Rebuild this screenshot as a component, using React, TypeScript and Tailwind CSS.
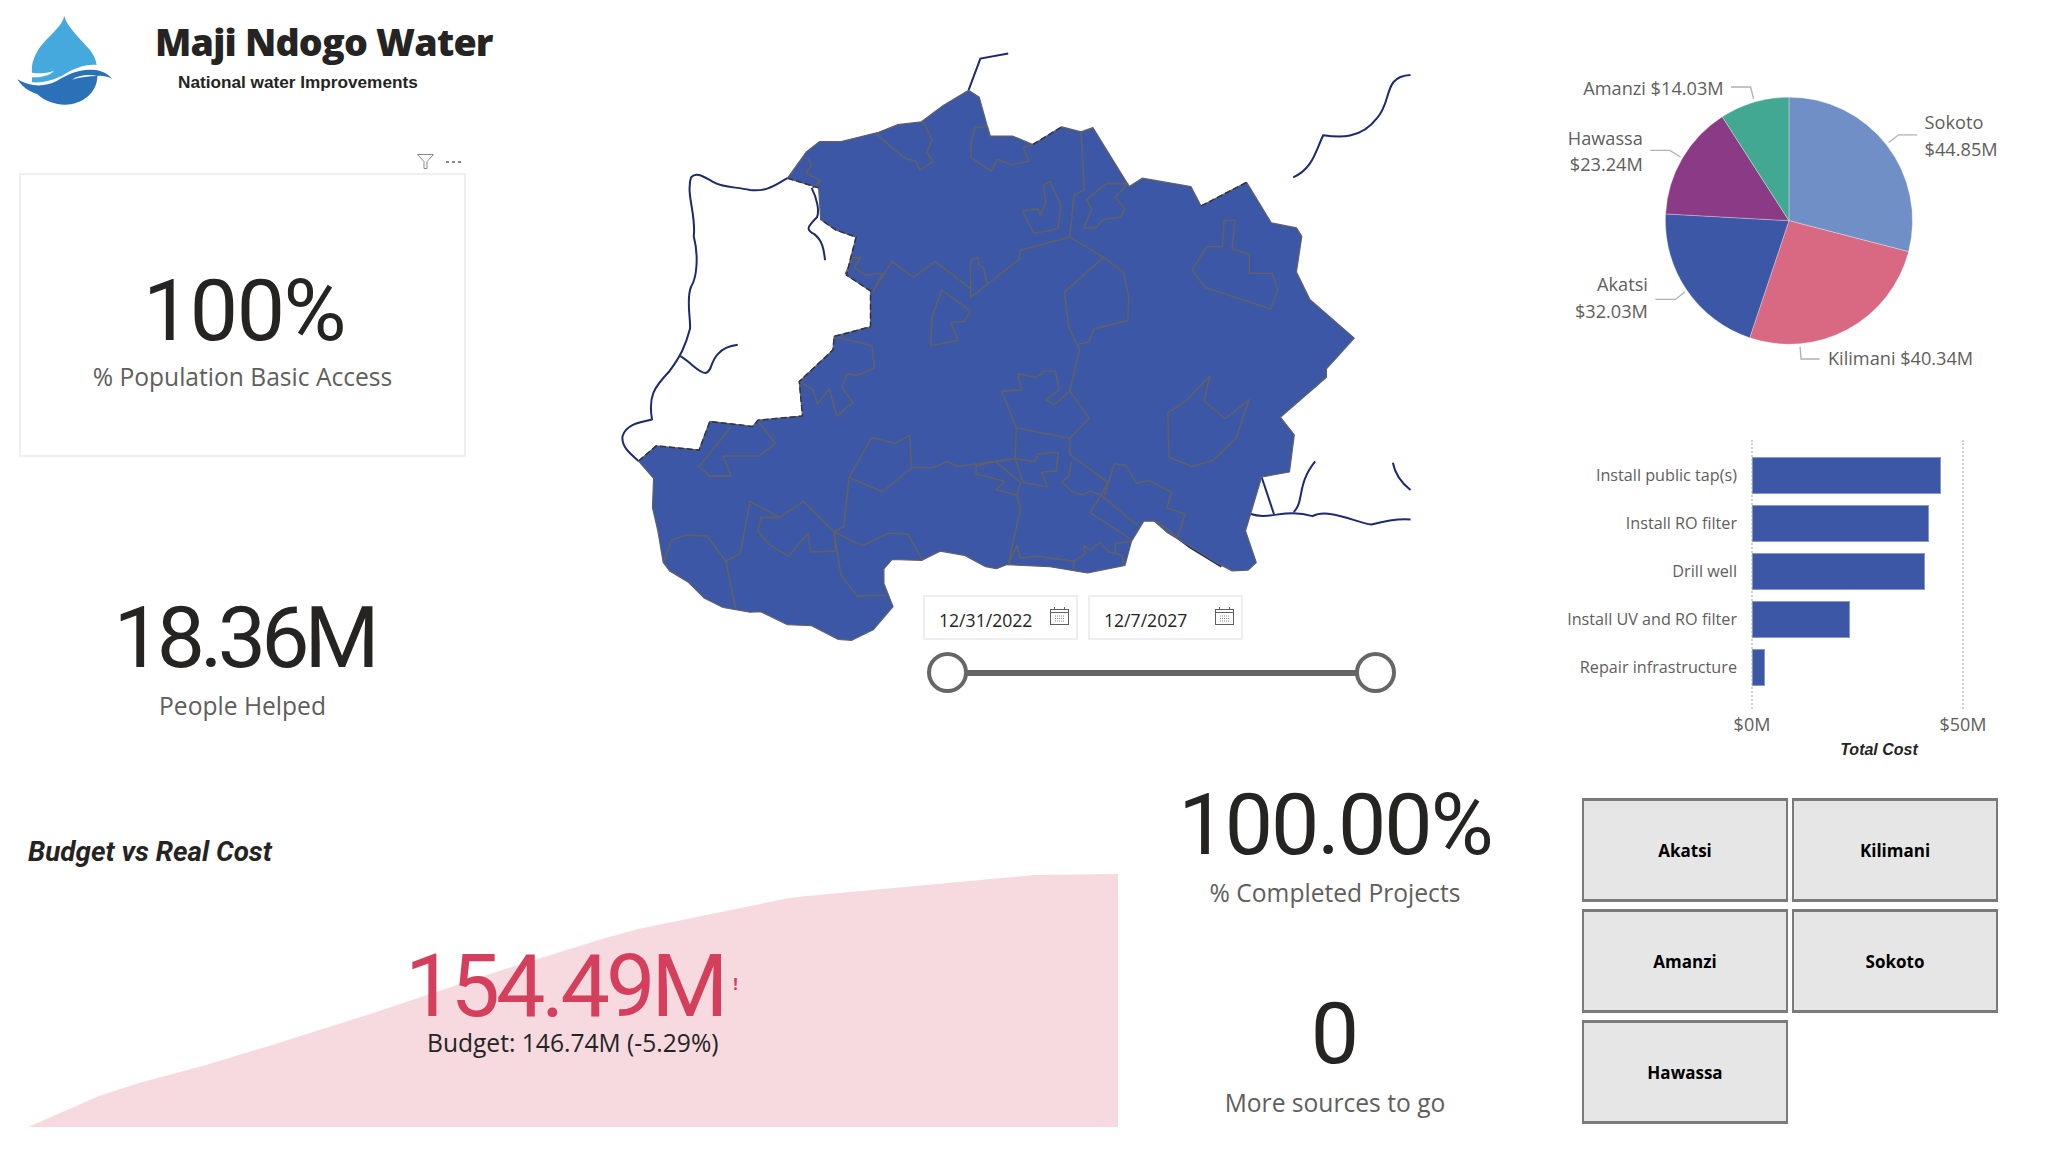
const pieData = [
  { name: 'Sokoto', value: 44.85, color: '#6f8fc6' },
  { name: 'Kilimani', value: 40.34, color: '#d96882' },
  { name: 'Akatsi', value: 32.03, color: '#3b57a6' },
  { name: 'Hawassa', value: 23.24, color: '#8b3a86' },
  { name: 'Amanzi', value: 14.03, color: '#43a892' },
]

const barData = [
  { name: 'Install public tap(s)', value: 44.8 },
  { name: 'Install RO filter', value: 42 },
  { name: 'Drill well', value: 41 },
  { name: 'Install UV and RO filter', value: 23.2 },
  { name: 'Repair infrastructure', value: 3.2 },
]

const districts = ['Akatsi', 'Kilimani', 'Amanzi', 'Sokoto', 'Hawassa']

const mapOutline =
  'M72 1024 L105 988 L185 998 L205 930 L285 942 L295 927 L378 917 L372 835 L435 760 L437 728 L505 705 L505 620 L460 582 L478 492 L440 475 L412 450 L408 375 L350 352 L385 290 L410 265 L450 265 L520 243 L555 225 L600 218 L640 180 L688 143 L708 160 L728 252 L770 252 L808 272 L862 230 L898 242 L920 232 L988 372 L1012 352 L1103 372 L1122 418 L1207 362 L1253 458 L1300 470 L1310 490 L1300 575 L1325 640 L1408 732 L1356 805 L1356 825 L1270 920 L1296 962 L1287 1050 L1235 1062 L1205 1190 L1225 1265 L1210 1283 L1180 1285 L1150 1265 L1100 1225 L1060 1195 L1035 1167 L1015 1167 L992 1215 L980 1272 L910 1290 L840 1275 L790 1272 L760 1270 L740 1280 L720 1275 L680 1248 L635 1238 L600 1260 L545 1258 L530 1280 L530 1315 L547 1370 L510 1425 L470 1450 L445 1448 L395 1415 L350 1413 L300 1382 L280 1383 L230 1372 L195 1350 L165 1312 L130 1285 L118 1265 L108 1190 L98 1135 L100 1065 Z'

const mapBorders = [
  'M515 245 L545 280 L570 305 L590 312 L597 333 L622 312 L610 290 L620 260 L603 218',
  'M728 252 L723 230 L700 232 L693 262 L693 303 L730 335 L742 307 L767 320 L800 312 L790 280 L808 272',
  'M898 242 L904 380 L885 392 L877 492 L785 523 L782 545 L692 635 L692 548 L705 540 L708 560 L716 565 L722 600',
  'M692 615 L626 550 L585 587 L545 550 L510 620 L528 578 L495 582 L475 565 L486 542 L472 540 L458 580',
  'M877 492 L940 540 L977 575 L987 635 L985 690 L922 710 L912 742 L890 747 L875 705 L867 622 L940 540',
  'M890 747 L895 760 L877 858 L913 922 L877 970 L777 945 L750 858 L787 855 L780 817 L815 825 L830 810 L850 810 L857 855 L832 878 L848 890 L877 858',
  'M777 945 L775 1018 L812 1025 L818 1007 L855 1003 L852 1048 L825 1050 L835 1085 L790 1075 L775 1018 L668 1037 L648 1025 L622 1040 L582 1040 L527 1097 L465 1063 L507 968 L550 982 L578 963 L582 1040',
  'M465 1063 L455 1180 L437 1192 L380 1120 L335 1158 L300 1158 L295 1190 L315 1222 L352 1250 L388 1195 L393 1240 L440 1238 L437 1192 L490 1225 L540 1195 L575 1198 L602 1260',
  'M877 970 L877 1008 L948 1075 L935 1105 L1003 1177',
  'M1040 1167 L1078 1205 L1092 1150 L1058 1135 L1067 1098 L1025 1070 L1002 1077 L982 1035 L960 1030 L942 1105',
  'M935 1105 L915 1147 L992 1210',
  'M880 1025 L875 1060 L862 1073 L880 1095 L900 1105 L915 1095 L935 1105',
  'M775 1018 L740 1025 L702 1035 L702 1055 L755 1072 L740 1092 L778 1105 L785 1135 L762 1270 L778 1225 L785 1255 L815 1250 L885 1262 L883 1285',
  'M738 1025 L785 1075 L778 1105',
  'M885 1262 L905 1245 L903 1225 L915 1235 L933 1217 L950 1240 L962 1243 L962 1220 L992 1215',
  'M962 1243 L975 1250 L978 1272',
  'M1138 822 L1128 882 L1167 923 L1212 878 L1187 970 L1145 1022 L1105 1037 L1062 1015 L1060 910 L1095 880 Z',
  'M1165 452 L1185 452 L1180 520 L1212 532 L1212 578 L1255 578 L1265 618 L1252 663 L1130 612 L1105 570 L1132 515 L1162 515 Z',
  'M840 360 L860 415 L855 472 L810 483 L788 430 L818 425 L822 440 L832 410 L828 368 Z',
  'M945 365 L985 365 L962 398 L980 425 L972 445 L940 450 L925 470 L903 470 L918 425 L908 403 Z',
  'M638 618 L692 668 L680 692 L655 695 L668 737 L617 750 L620 680 Z',
  'M437 728 L508 750 L512 803 L480 820 L460 817 L452 850 L472 885 L442 917 L428 852 L406 888 L398 855 L372 835',
  'M245 942 L185 1037 L205 1060 L245 1060 L230 1012 L297 1012 L327 982 L295 928',
  'M118 1265 L133 1212 L160 1200 L200 1202 L235 1262 L262 1243 L280 1120 L335 1158',
  'M235 1262 L253 1375',
  'M437 1192 L450 1295 L480 1345 L535 1343',
  'M388 305 L395 320 L385 340 L412 358 L397 375',
]

const mapRivers = [
  'M688 143 L710 68 L762 56',
  'M1294 350 C1330 330 1335 290 1350 250 C1380 255 1420 260 1450 210 C1480 170 1460 110 1513 107',
  'M350 352 C330 365 315 385 280 380 C250 372 230 375 210 360 C195 350 180 335 170 350 C160 390 180 440 175 490 C185 540 180 590 170 610 C160 640 170 690 168 710 C160 750 150 775 130 810 C100 850 90 870 97 925 C90 930 50 930 42 965 C40 990 55 1005 72 1024',
  'M150 775 C170 790 185 815 197 815 C210 810 205 790 220 770 C230 755 245 750 257 748',
  'M395 375 C405 400 410 430 405 445 C385 470 385 475 400 485 C415 500 418 520 420 547',
  'M1235 1062 L1258 1150',
  'M1215 1150 C1250 1165 1280 1135 1330 1155 C1360 1135 1410 1170 1440 1175 C1470 1165 1490 1160 1513 1163',
  'M1295 1145 C1315 1120 1300 1080 1335 1025',
  'M1480 1028 C1485 1060 1500 1080 1513 1093',
  'M1040 1170 L1100 1228 L1160 1275',
]

const mapDashes = [
  'M72 1024 L105 988 L185 998 L205 930 L285 942 L295 927 L378 917 L372 835 L435 760 L437 728 L505 705 L505 620 L460 582 L478 492 L440 475 L412 450',
  'M350 352 L408 375',
  'M808 272 L862 230',
  'M1122 418 L1207 362',
]

function slicePath(startValue: number, value: number, total: number) {
  const cx = 769
  const cy = 507
  const r = 367
  const a0 = (startValue / total) * Math.PI * 2
  const a1 = ((startValue + value) / total) * Math.PI * 2
  const x0 = cx + r * Math.sin(a0)
  const y0 = cy - r * Math.cos(a0)
  const x1 = cx + r * Math.sin(a1)
  const y1 = cy - r * Math.cos(a1)
  return `M${cx} ${cy} L${x0} ${y0} A${r} ${r} 0 ${a1 - a0 > Math.PI ? 1 : 0} 1 ${x1} ${y1} Z`
}

function Logo() {
  return (
    <svg className="w-[130px] h-[120px] shrink-0" viewBox="0 0 390 360">
      <path
        d="M193 48 C200 80 240 115 270 150 C283 168 288 180 290 195 C255 192 225 205 195 222 C170 238 130 250 96 247 L96 232 C120 232 150 228 162 212 C140 220 115 222 96 218 C93 190 105 160 125 135 C155 100 185 80 193 48 Z"
        fill="#45a9dd"
      />
      <path
        d="M52 238 C85 258 130 264 170 243 C205 222 240 205 285 210 C305 212 325 222 336 236 C318 228 305 226 292 228 C292 280 245 314 195 314 C160 314 130 300 112 282 C85 275 65 258 52 238 Z"
        fill="#2b71b8"
      />
      <path d="M216 239 C235 226 265 222 292 228 C265 228 240 232 216 239 Z" fill="#ffffff" />
    </svg>
  )
}

function Kpi({ value, label, valueClass, labelClass }: { value: string; label: string; valueClass: string; labelClass: string }) {
  return (
    <div className="flex flex-col items-center">
      <div className={`font-['Roboto'] text-[#252423] leading-none ${valueClass}`}>{value}</div>
      <div className={`font-['Open_Sans'] text-[#605e5c] text-[24.6px] leading-[36px] ${labelClass}`}>{label}</div>
    </div>
  )
}

function CalendarIcon() {
  return (
    <svg className="w-[19px] h-[18px] shrink-0" viewBox="0 0 19 18" fill="none">
      <rect x="0.5" y="2.5" width="18" height="15" stroke="#605e5c" />
      <path d="M1 5.5 H18" stroke="#605e5c" />
      <path d="M4.5 0 V3 M14.5 0 V3" stroke="#605e5c" />
      <path d="M5 9 H14 M5 11.5 H14 M5 14 H14" stroke="#8a8886" strokeDasharray="1 1" />
    </svg>
  )
}

function DateBox({ value }: { value: string }) {
  return (
    <div className="w-[155px] h-[45px] border-2 border-[#eeeeee] bg-white flex items-start pl-[14px] pr-[7px] pt-[10px] justify-between">
      <span className="font-['Open_Sans'] text-[17.6px] leading-[26px] text-[#252423]">{value}</span>
      <CalendarIcon />
    </div>
  )
}

function MapVisual() {
  return (
    <div className="relative w-[840px] h-[660px]">
      <svg className="w-[840px] h-[660px]" viewBox="0 0 1568 1568" preserveAspectRatio="none" fill="none">
        {mapRivers.map((d) => (
          <path key={d} d={d} stroke="#1c2a6e" strokeWidth="2" vectorEffect="non-scaling-stroke" />
        ))}
        <path d={mapOutline} fill="#3b57a6" stroke="#5f6068" strokeWidth="1.2" strokeLinejoin="round" vectorEffect="non-scaling-stroke" />
        {mapBorders.map((d) => (
          <path key={d} d={d} stroke="#5f6068" strokeWidth="1.6" strokeLinejoin="round" vectorEffect="non-scaling-stroke" />
        ))}
        {mapDashes.map((d) => (
          <path key={d} d={d} stroke="#2f3344" strokeWidth="1.5" strokeDasharray="6 3" vectorEffect="non-scaling-stroke" />
        ))}
      </svg>

      {/* date slicer sits on top of the map */}
      <div className="absolute left-[323px] top-[565px] w-[480px]">
        <div className="flex gap-[10px]">
          <DateBox value="12/31/2022" />
          <DateBox value="12/7/2027" />
        </div>
        <div className="relative mt-[12px] ml-[4px] w-[469px] h-[41px] flex items-center">
          <div className="w-[428px] h-[6px] ml-[20px] bg-[#666666]" />
          <div className="absolute left-0 top-0 w-[41px] h-[41px] rounded-full border-4 border-[#666666] bg-white" />
          <div className="absolute left-[428px] top-0 w-[41px] h-[41px] rounded-full border-4 border-[#666666] bg-white" />
        </div>
      </div>
    </div>
  )
}

function PieVisual() {
  const total = pieData.reduce((sum, d) => sum + d.value, 0)
  let running = 0
  return (
    <svg className="w-[528px] h-[340px]" viewBox="0 0 1568 1010" fill="none">
      {pieData.map((d) => {
        const path = slicePath(running, d.value, total)
        running += d.value
        return <path key={d.name} d={path} fill={d.color} stroke="#ffffff" strokeOpacity="0.45" strokeWidth="2" />
      })}
      <g stroke="#b3b0ad" strokeWidth="4">
        <path d="M597 110 L655 110 L664 145" />
        <path d="M1065 275 L1095 252 L1150 252" />
        <path d="M357 298 L415 298 L447 318" />
        <path d="M372 741 L432 741 L460 718" />
        <path d="M802 882 L805 918 L860 918" />
      </g>
      <g fill="#605e5c" fontFamily="Open Sans" fontSize="54">
        <text x="575" y="133" textAnchor="end">Amanzi $14.03M</text>
        <text x="1172" y="235">Sokoto</text>
        <text x="1172" y="314">$44.85M</text>
        <text x="335" y="281" textAnchor="end">Hawassa</text>
        <text x="335" y="359" textAnchor="end">$23.24M</text>
        <text x="350" y="717" textAnchor="end">Akatsi</text>
        <text x="350" y="795" textAnchor="end">$32.03M</text>
        <text x="885" y="936">Kilimani $40.34M</text>
      </g>
    </svg>
  )
}

function BarVisual() {
  return (
    <div>
      <div className="relative pt-[17px] h-[269px]">
        <div className="absolute left-[221px] top-0 h-[269px] border-l-2 border-dotted border-[#d2d0ce]" />
        <div className="absolute left-[432px] top-0 h-[269px] border-l-2 border-dotted border-[#d2d0ce]" />
        <div className="relative flex flex-col gap-[11px]">
          {barData.map((bar) => (
            <div key={bar.name} className="flex items-center h-[37px]">
              <div className="w-[207px] text-right font-['Open_Sans'] text-[16.2px] text-[#605e5c] whitespace-nowrap">{bar.name}</div>
              <div
                className="ml-[15px] h-[37px] bg-[#3b57a6] border border-[#8797cc]"
                style={{ width: `${bar.value * 4.214}px` }}
              />
            </div>
          ))}
        </div>
      </div>
      <div className="flex mt-[2px] font-['Open_Sans'] text-[18px] leading-[26px] text-[#605e5c]">
        <div className="w-[60px] ml-[192px] text-center">$0M</div>
        <div className="w-[80px] ml-[141px] text-center">$50M</div>
      </div>
      <div className="ml-[289px] w-[120px] text-center font-['Liberation_Sans'] font-bold italic text-[16px] leading-[20px] text-[#252423] mt-[3px]">
        Total Cost
      </div>
    </div>
  )
}

function BudgetCard() {
  return (
    <div className="relative w-[1090px] ml-[28px] h-[337px] shrink-0 pt-[44px]">
      <div className="font-['Roboto'] font-bold italic text-[27.8px] leading-[36px] text-[#252423]">Budget vs Real Cost</div>
      <svg className="mt-[4px] w-[1090px] h-[253px]" viewBox="0 0 1090 253">
        <path
          d="M0 253 L71 222 L111 209 L178 191 L244 171 L339 141 L471 97 L574 65 L610 55 L761 24 L779 22 L1007 1 L1090 0 L1090 253 Z"
          fill="#f6dae0"
        />
      </svg>
      {/* callout over the area */}
      <div className="absolute left-[377px] top-[152px] flex flex-col items-start">
        <div className="flex items-start">
          <span className="font-['Roboto'] text-[88px] leading-none tracking-[-4px] text-[#d4405c]">154.49M</span>
          <span className="font-['Open_Sans'] font-bold text-[16px] text-[#d4405c] mt-[30px] ml-[9px]">!</span>
        </div>
        <div className="font-['Open_Sans'] text-[24.6px] leading-[34px] text-[#252423] ml-[22px] mt-[-4px] whitespace-nowrap">
          Budget: 146.74M (-5.29%)
        </div>
      </div>
    </div>
  )
}

export default function App() {
  return (
    <div className="w-[2058px] h-[1155px] bg-white overflow-hidden flex flex-col">
      <div className="flex h-[790px] shrink-0">
        {/* left column */}
        <div className="w-[600px] shrink-0">
          <div className="flex h-[120px]">
            <Logo />
            <div className="ml-[25px] pt-[16px]">
              <div className="font-['Open_Sans'] font-extrabold text-[37.6px] leading-[52px] tracking-[-0.8px] text-[#252423] whitespace-nowrap">
                Maji Ndogo Water
              </div>
              <div className="ml-[23px] mt-[2px] font-['Liberation_Sans'] font-bold text-[17.2px] leading-[24px] text-[#252423] whitespace-nowrap">
                National water Improvements
              </div>
            </div>
          </div>
          <div className="mt-[30px] ml-[19px] w-[447px] h-[23px] flex items-center justify-end gap-[12px] pr-[5px]">
            <svg className="w-[17px] h-[15px]" viewBox="0 0 17 15" fill="none" stroke="#8a8886" strokeWidth="1">
              <path d="M0.5 0.5 H16.5 L10 7.5 V14.5 H7 V7.5 Z" />
            </svg>
            <div className="flex gap-[3px]">
              <div className="w-[3px] h-[2px] bg-[#8a8886]" />
              <div className="w-[3px] h-[2px] bg-[#8a8886]" />
              <div className="w-[3px] h-[2px] bg-[#8a8886]" />
            </div>
          </div>
          <div className="ml-[19px] w-[447px] h-[284px] border-2 border-[#efefef] pt-[93px]">
            <Kpi value="100%" label="% Population Basic Access" valueClass="text-[86px] tracking-[-1.5px] ml-[3px]" labelClass="mt-[5px]" />
          </div>
          <div className="ml-[19px] w-[447px] mt-[138px]">
            <Kpi value="18.36M" label="People Helped" valueClass="text-[86px] tracking-[-5px] ml-[3px]" labelClass="mt-[7px]" />
          </div>
        </div>

        {/* map */}
        <div className="w-[930px] shrink-0 pt-[30px]">
          <MapVisual />
        </div>

        {/* pie + bars */}
        <div className="w-[528px] shrink-0 pt-[50px]">
          <PieVisual />
          <div className="mt-[50px]">
            <BarVisual />
          </div>
        </div>
      </div>

      <div className="flex flex-1">
        <BudgetCard />
        <div className="w-[434px] shrink-0 flex flex-col">
          <Kpi value="100.00%" label="% Completed Projects" valueClass="text-[86px] tracking-[-2px] mt-[-8px]" labelClass="mt-[7px]" />
          <div className="mt-[80px]">
            <Kpi value="0" label="More sources to go" valueClass="text-[86px]" labelClass="mt-[8px]" />
          </div>
        </div>
        <div className="ml-[30px] mt-[8px] grid grid-cols-[206px_206px] auto-rows-[104px] gap-x-[4px] gap-y-[7px] h-fit">
          {districts.map((name) => (
            <div
              key={name}
              className="bg-[#e6e6e6] border-2 border-t-[3px] border-b-[3px] border-[#7a7a7a] flex items-center justify-center pt-[1px] font-['Open_Sans'] font-bold text-[17px] text-black"
            >
              {name}
            </div>
          ))}
        </div>
      </div>
    </div>
  )
}
